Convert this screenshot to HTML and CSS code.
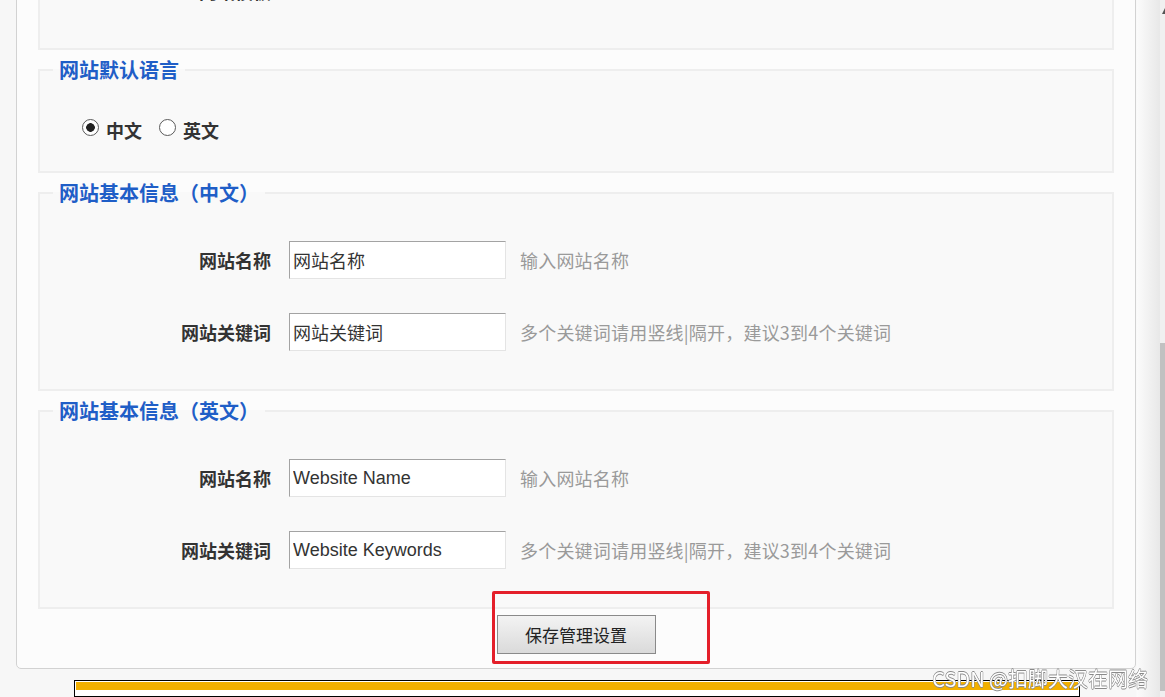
FILE: index.html
```html
<!DOCTYPE html>
<html lang="zh-CN">
<head>
<meta charset="utf-8">
<title>网站管理设置</title>
<link rel="stylesheet" href="styles.css">
</head>
<body>
<div class="screen">
  <div class="content">
    <form class="panel">
      <fieldset class="group">
        <legend>网站基本设置</legend>
        <div class="row">
          <label class="label">网站模板</label>
          <span class="value">default</span>
        </div>
      </fieldset>

      <fieldset class="group group-lang">
        <legend>网站默认语言</legend>
        <div class="radios">
          <label class="radio"><input type="radio" name="lang" checked><span>中文</span></label>
          <label class="radio"><input type="radio" name="lang"><span>英文</span></label>
        </div>
      </fieldset>

      <fieldset class="group">
        <legend>网站基本信息（中文）</legend>
        <div class="row">
          <label class="label">网站名称</label>
          <input class="field" type="text" value="网站名称">
          <span class="hint">输入网站名称</span>
        </div>
        <div class="row">
          <label class="label">网站关键词</label>
          <input class="field" type="text" value="网站关键词">
          <span class="hint">多个关键词请用竖线|隔开，建议3到4个关键词</span>
        </div>
      </fieldset>

      <fieldset class="group group-last">
        <legend>网站基本信息（英文）</legend>
        <div class="row">
          <label class="label">网站名称</label>
          <input class="field" type="text" value="Website Name">
          <span class="hint">输入网站名称</span>
        </div>
        <div class="row">
          <label class="label">网站关键词</label>
          <input class="field" type="text" value="Website Keywords">
          <span class="hint">多个关键词请用竖线|隔开，建议3到4个关键词</span>
        </div>
      </fieldset>

      <div class="actions">
        <div class="btn-wrap">
          <button class="btn" type="button">保存管理设置</button>
          <span class="mark"></span>
        </div>
      </div>
    </form>
    <div class="footer-box"><div class="footer-bar"></div></div>
  </div>
  <div class="scrollbar"><span class="arrow"></span><span class="thumb"></span></div>
</div>
<div class="watermark">CSDN @扣脚大汉在网络</div>
</body>
</html>
```

FILE: styles.css
```css
html, body {
  margin: 0;
  padding: 0;
  height: 100%;
  overflow: hidden;
}

body {
  font-family: "Noto Sans CJK SC", "Liberation Sans", sans-serif;
  color: #333;
  background: #f7f7f7;
}

.screen {
  display: flex;
  height: 697px;
  overflow: hidden;
}

.content {
  flex: 1;
  display: flex;
  flex-direction: column;
  align-items: flex-start;
  background: linear-gradient(to right, #f7f7f7 0, #f7f7f7 1136px, #fbfbfb 1137px, #e8e8e8 1160px);
}

.panel {
  margin: -101px 0 0 16px;
  width: 1120px;
  box-sizing: border-box;
  padding: 12px 21px 14px 21px;
  background: #fcfcfc;
  border: 1px solid #d2d2d2;
  border-radius: 0 0 5px 5px;
}

.group {
  margin: 0 0 8px 0;
  padding: 36px 0 38px 0;
  border: 2px solid #eeeeee;
  background: #f9f9f9;
  min-width: 0;
}

.group-last {
  margin-bottom: 6px;
}

.group legend {
  margin-left: 13px;
  padding: 0 6px;
  font-size: 20px;
  line-height: 24px;
  font-weight: bold;
  color: #1f5ec7;
}

.group-lang {
  padding-top: 36px;
  padding-bottom: 29px;
}

.row {
  display: flex;
  align-items: center;
  height: 38px;
}

.row + .row {
  margin-top: 34px;
}

.label {
  width: 231px;
  margin-right: 18px;
  text-align: right;
  font-size: 18px;
  font-weight: bold;
  color: #333;
}

.value {
  font-size: 18px;
  color: #999;
}

.field {
  width: 217px;
  height: 38px;
  box-sizing: border-box;
  margin: 0;
  padding: 0 3px;
  border: 1px solid;
  border-color: #a3a3a3 #e4e4e4 #e4e4e4 #a3a3a3;
  background: #fff;
  font-family: "Liberation Sans", "Noto Sans CJK SC", sans-serif;
  font-size: 18px;
  color: #333;
  outline: none;
}

.hint {
  margin-left: 14px;
  font-size: 18px;
  letter-spacing: 0.2px;
  color: #9a9a9a;
}

.radios {
  display: flex;
  align-items: center;
  height: 24px;
  padding-left: 42px;
}

.radio {
  display: flex;
  align-items: center;
  margin-right: 17px;
  font-size: 18px;
  font-weight: bold;
  color: #333;
}

.radio input {
  appearance: none;
  -webkit-appearance: none;
  width: 17px;
  height: 17px;
  margin: 0 7px 0 0;
  box-sizing: border-box;
  border: 1px solid #5a5a5a;
  border-radius: 50%;
  background: #fff;
  position: relative;
  top: -3px;
}

.radio input:checked {
  background: radial-gradient(circle, #222 0, #222 4px, #fff 4.6px);
}

.actions {
  display: flex;
  justify-content: center;
  padding-top: 0;
}

.btn-wrap {
  position: relative;
}

.btn {
  width: 159px;
  height: 39px;
  margin: 0;
  border: 1px solid #8a8a8a;
  background: linear-gradient(#f3f3f3, #dadada);
  font-family: "Noto Sans CJK SC", sans-serif;
  font-size: 17px;
  color: #222;
}

.mark {
  position: absolute;
  left: -5px;
  top: -24px;
  width: 218px;
  height: 73px;
  box-sizing: border-box;
  border: 3px solid #e41f2a;
  border-radius: 2px;
  pointer-events: none;
}

.footer-box {
  margin: 11px 0 0 74px;
  width: 1006px;
  height: 40px;
  box-sizing: border-box;
  padding: 1px;
  border: 1px solid #000;
  background: #fff;
}

.footer-bar {
  height: 8px;
  background: #f2b000;
}

.scrollbar {
  width: 5px;
  flex: none;
  display: flex;
  flex-direction: column;
  background: #f0f0f0;
}

.arrow {
  display: block;
  margin: 8px 0 0 2px;
  width: 0;
  height: 0;
  border-left: 3px solid transparent;
  border-bottom: 6px solid #555;
}

.thumb {
  display: block;
  margin-top: 329px;
  height: 348px;
  background: #c1c1c1;
}

.watermark {
  position: fixed;
  right: 17px;
  bottom: 6px;
  font-family: "Noto Sans CJK SC", sans-serif;
  font-size: 20px;
  line-height: 24px;
  color: #fff;
  text-shadow: 0.6px 0 #8a8a8a, -0.6px 0 #8a8a8a, 0 0.6px #8a8a8a, 0 -0.6px #8a8a8a;
  white-space: nowrap;
}
```
